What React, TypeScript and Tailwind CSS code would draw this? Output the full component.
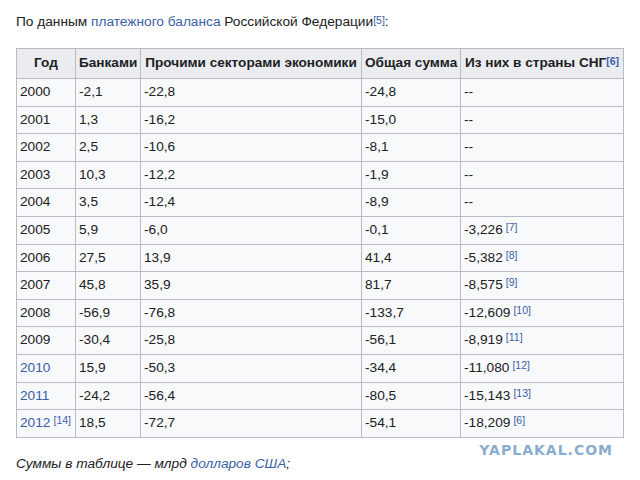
const rows: { year: string; yearLink?: boolean; yearRef?: string; banks: string; other: string; total: string; cis: string; cisRef?: string }[] = [
  { year: '2000', banks: '-2,1', other: '-22,8', total: '-24,8', cis: '--' },
  { year: '2001', banks: '1,3', other: '-16,2', total: '-15,0', cis: '--' },
  { year: '2002', banks: '2,5', other: '-10,6', total: '-8,1', cis: '--' },
  { year: '2003', banks: '10,3', other: '-12,2', total: '-1,9', cis: '--' },
  { year: '2004', banks: '3,5', other: '-12,4', total: '-8,9', cis: '--' },
  { year: '2005', banks: '5,9', other: '-6,0', total: '-0,1', cis: '-3,226', cisRef: '7' },
  { year: '2006', banks: '27,5', other: '13,9', total: '41,4', cis: '-5,382', cisRef: '8' },
  { year: '2007', banks: '45,8', other: '35,9', total: '81,7', cis: '-8,575', cisRef: '9' },
  { year: '2008', banks: '-56,9', other: '-76,8', total: '-133,7', cis: '-12,609', cisRef: '10' },
  { year: '2009', banks: '-30,4', other: '-25,8', total: '-56,1', cis: '-8,919', cisRef: '11' },
  { year: '2010', yearLink: true, banks: '15,9', other: '-50,3', total: '-34,4', cis: '-11,080', cisRef: '12' },
  { year: '2011', yearLink: true, banks: '-24,2', other: '-56,4', total: '-80,5', cis: '-15,143', cisRef: '13' },
  { year: '2012', yearLink: true, yearRef: '14', banks: '18,5', other: '-72,7', total: '-54,1', cis: '-18,209', cisRef: '6' },
];

function Ref({ n }: { n: string }) {
  return <sup className="text-[10.5px] text-[#3a5fa8] relative -top-[3px] ml-[3px]">[{n}]</sup>;
}

const th = 'border border-[#b9bdc3] bg-[#eaecf0] h-[30px] px-[3px] text-[13.6px] font-bold text-center whitespace-nowrap';
const td = 'border border-[#b9bdc3] h-[27.6px] px-[3px] text-left whitespace-nowrap';

export default function App() {
  return (
    <div className="w-[640px] h-[480px] overflow-hidden bg-white text-[13.7px] text-[#202122] font-['Liberation_Sans',Arial,sans-serif] relative">
      <p className="px-4 pt-[12px] leading-[20px]">
        По данным <span className="text-[#3a5fa8]">платежного баланса</span> Российской Федерации
        <sup className="text-[10.5px] text-[#3a5fa8] relative -top-[2px]">[5]</sup>:
      </p>

      <table className="ml-4 mt-[16px] border-collapse w-[607px] table-fixed bg-[#f8f9fa]">
        <colgroup>
          <col className="w-[59px]" />
          <col className="w-[65px]" />
          <col className="w-[221px]" />
          <col className="w-[99px]" />
          <col className="w-[163px]" />
        </colgroup>
        <thead>
          <tr>
            <th className={th}>Год</th>
            <th className={th}>Банками</th>
            <th className={th}>Прочими секторами экономики</th>
            <th className={th}>Общая сумма</th>
            <th className={th}>
              Из них в страны СНГ
              <sup className="text-[10.5px] text-[#3a5fa8] relative -top-[2px]">[6]</sup>
            </th>
          </tr>
        </thead>
        <tbody>
          {rows.map((r) => (
            <tr key={r.year}>
              <td className={td}>
                <span className={r.yearLink ? 'text-[#3a5fa8]' : ''}>{r.year}</span>
                {r.yearRef && <Ref n={r.yearRef} />}
              </td>
              <td className={td}>{r.banks}</td>
              <td className={td}>{r.other}</td>
              <td className={td}>{r.total}</td>
              <td className={td}>
                {r.cis}
                {r.cisRef && <Ref n={r.cisRef} />}
              </td>
            </tr>
          ))}
        </tbody>
      </table>

      <div className="flex justify-end pr-[27px] mt-[6px] h-[10px]">
        <span className="font-['DejaVu_Sans',sans-serif] font-bold text-[14px] leading-[12px] tracking-[1px] text-[#8aadcd]">
          YAPLAKAL.COM
        </span>
      </div>

      <p className="px-4 italic leading-[20px]">
        Суммы в таблице — млрд <span className="text-[#3a5fa8]">долларов США</span>;
      </p>
      <p className="px-4 mt-[4px] italic leading-[20px]">Знак «−» означает чистый отток капитала из страны.</p>
    </div>
  );
}
